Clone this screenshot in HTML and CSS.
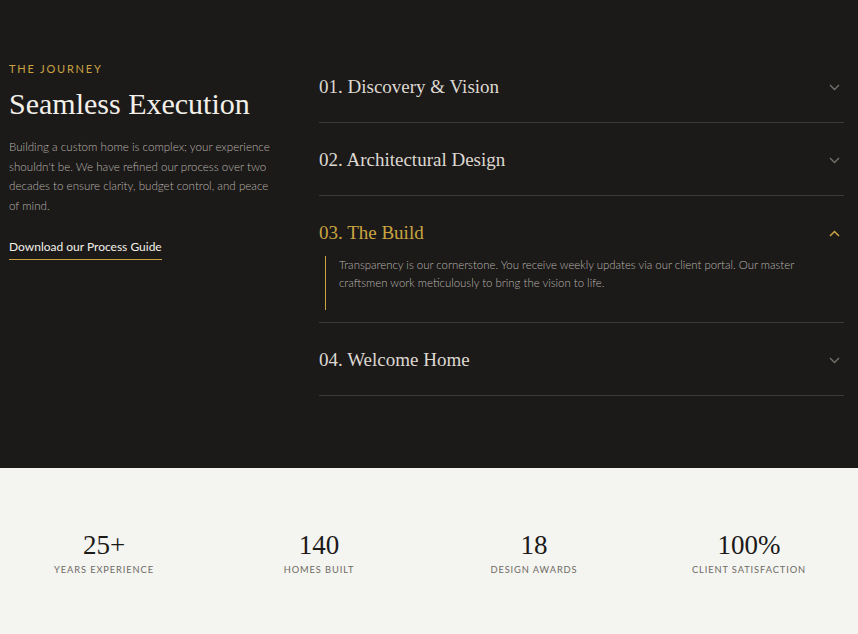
FILE: index.html
```html
<!DOCTYPE html>
<html lang="en">
<head>
  <meta charset="UTF-8" />
  <meta name="viewport" content="width=device-width, initial-scale=1.0"/>
  <title>The Journey</title>
  <link rel="stylesheet" href="styles.css">
</head>
<body>

<section class="journey">
  <div class="journey-intro">
    <p class="eyebrow">The Journey</p>
    <h2>Seamless Execution</h2>
    <p class="lead">Building a custom home is complex; your experience shouldn't be. We have refined our process over two decades to ensure clarity, budget control, and peace of mind.</p>
    <a href="#" class="guide-link">Download our Process Guide</a>
  </div>

  <div class="steps">
    <div class="step">
      <div class="step-head">
        <h3>01. Discovery &amp; Vision</h3>
        <svg class="chev" width="11" height="7" viewBox="0 0 11 7"><path d="M1 1l4.5 4.5L10 1" fill="none" stroke="currentColor" stroke-width="1.3"/></svg>
      </div>
    </div>
    <div class="step">
      <div class="step-head">
        <h3>02. Architectural Design</h3>
        <svg class="chev" width="11" height="7" viewBox="0 0 11 7"><path d="M1 1l4.5 4.5L10 1" fill="none" stroke="currentColor" stroke-width="1.3"/></svg>
      </div>
    </div>
    <div class="step open">
      <div class="step-head">
        <h3>03. The Build</h3>
        <svg class="chev" width="11" height="7" viewBox="0 0 11 7"><path d="M1 6l4.5-4.5L10 6" fill="none" stroke="currentColor" stroke-width="1.5"/></svg>
      </div>
      <div class="step-body">
        <p>Transparency is our cornerstone. You receive weekly updates via our client portal. Our master craftsmen work meticulously to bring the vision to life.</p>
      </div>
    </div>
    <div class="step">
      <div class="step-head">
        <h3>04. Welcome Home</h3>
        <svg class="chev" width="11" height="7" viewBox="0 0 11 7"><path d="M1 1l4.5 4.5L10 1" fill="none" stroke="currentColor" stroke-width="1.3"/></svg>
      </div>
    </div>
  </div>
</section>

<section class="stats">
  <div class="stat">
    <span class="num">25+</span>
    <span class="label">Years Experience</span>
  </div>
  <div class="stat">
    <span class="num">140</span>
    <span class="label">Homes Built</span>
  </div>
  <div class="stat">
    <span class="num">18</span>
    <span class="label">Design Awards</span>
  </div>
  <div class="stat">
    <span class="num">100%</span>
    <span class="label">Client Satisfaction</span>
  </div>
</section>

</body>
</html>
```

FILE: styles.css
```css
* { box-sizing: border-box; margin: 0; padding: 0; }

body {
  font-family: 'Lato', sans-serif;
  background: #f4f4f0;
  color: #333;
}

.journey {
  background: #1c1a19;
  display: grid;
  grid-template-columns: 270px 1fr;
  gap: 40px;
  padding: 50px 14px 72px 9px;
}

.journey-intro {
  padding-top: 12px;
}

.eyebrow {
  font-size: 11px;
  letter-spacing: 1.8px;
  text-transform: uppercase;
  color: #c9a441;
  line-height: 14px;
}

h2 {
  font-family: 'Liberation Serif', serif;
  font-weight: 400;
  font-size: 30px;
  line-height: 38px;
  color: #f3f0ea;
  margin-top: 9px;
}

.lead {
  font-size: 11.6px;
  font-weight: 300;
  line-height: 19.5px;
  color: #b8b3ab;
  margin-top: 14px;
}

.guide-link {
  display: inline-block;
  margin-top: 24px;
  font-size: 12px;
  color: #f3f0ea;
  text-decoration: none;
  padding-bottom: 5px;
  border-bottom: 1px solid #c9a441;
}

.step {
  border-bottom: 1px solid #3b3836;
}

.step-head {
  display: flex;
  align-items: center;
  justify-content: space-between;
  padding: 25px 4px 23px 0;
  cursor: pointer;
}

.step-head h3 {
  font-family: 'Liberation Serif', serif;
  font-weight: 400;
  font-size: 19px;
  line-height: 24px;
  color: #dcd8d1;
}

.chev {
  color: #77726c;
}

.step.open .step-head {
  padding-bottom: 11px;
}

.step.open h3,
.step.open .chev {
  color: #c9a441;
}

.step-body {
  margin: 0 0 12px 6px;
  padding: 0 20px 18px 13px;
  border-left: 1px solid #c9a441;
}

.step-body p {
  font-size: 11.4px;
  font-weight: 300;
  line-height: 18px;
  color: #b8b3ab;
}

.stats {
  display: grid;
  grid-template-columns: repeat(4, 1fr);
  gap: 25px;
  padding: 62px 14px 60px 9px;
}

.stat {
  display: flex;
  flex-direction: column;
  align-items: center;
}

.num {
  font-family: 'Liberation Serif', serif;
  font-size: 27px;
  line-height: 30px;
  color: #1c1a19;
}

.label {
  font-size: 9.3px;
  letter-spacing: 0.9px;
  text-transform: uppercase;
  color: #6e6b66;
  margin-top: 4px;
}
```
